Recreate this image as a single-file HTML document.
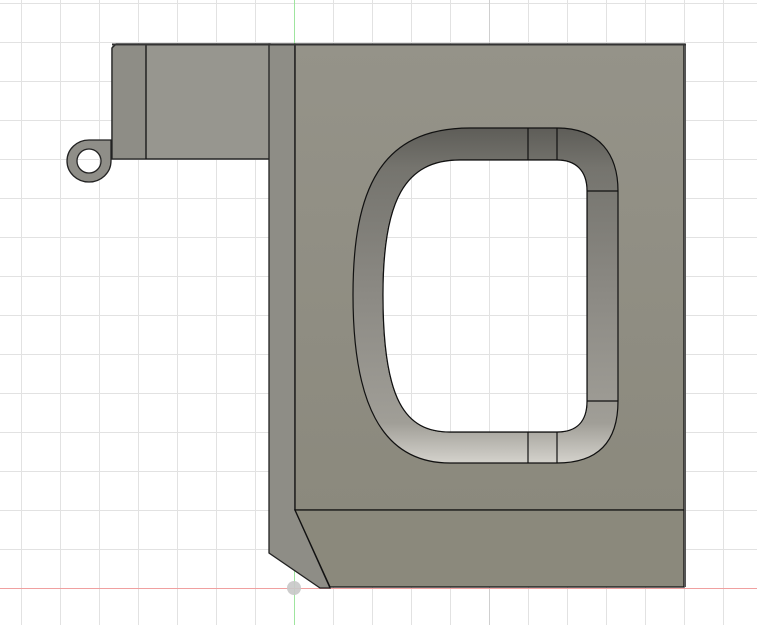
<!DOCTYPE html>
<html><head><meta charset="utf-8"><style>html,body{margin:0;padding:0;background:#fff;overflow:hidden}svg{display:block}</style></head>
<body>
<svg width="757" height="625" viewBox="0 0 757 625" xmlns="http://www.w3.org/2000/svg">
<defs>
<pattern id="g" x="294" y="588" width="39" height="39" patternUnits="userSpaceOnUse">
<path d="M0.5 0V39M0 0.5H39" stroke="#e2e2e2" stroke-width="1" fill="none"/>
</pattern>
<linearGradient id="tube" x1="0" y1="0" x2="0" y2="1">
<stop offset="0" stop-color="#5e5d58"/>
<stop offset="0.12" stop-color="#75746e"/>
<stop offset="0.5" stop-color="#8c8a84"/>
<stop offset="0.88" stop-color="#a09e97"/>
<stop offset="1" stop-color="#d4d2cc"/>
</linearGradient>
<linearGradient id="body" x1="0" y1="0" x2="0" y2="1">
<stop offset="0" stop-color="#959389"/>
<stop offset="1" stop-color="#8b897d"/>
</linearGradient>
</defs>
<rect width="757" height="625" fill="#fff"/>
<rect width="757" height="625" fill="url(#g)"/>
<line x1="489.5" y1="0" x2="489.5" y2="625" stroke="#cfcfcf"/>
<line x1="294.5" y1="0" x2="294.5" y2="625" stroke="#9fe59f"/>
<line x1="0" y1="588.5" x2="757" y2="588.5" stroke="#f0a0a0"/>
<!-- ring -->
<path fill-rule="evenodd" d="M89 140 L111 140 L111 161 A22 21 0 1 1 89 140 Z M101 161 A12 12 0 1 0 77 161 A12 12 0 1 0 101 161 Z" fill="#8f8e88" stroke="#222" stroke-width="1.3"/>
<!-- tab -->
<path d="M112 48 L116 44 L270 44 L270 159 L112 159 Z" fill="#97968f" stroke="#222" stroke-width="1.3"/>
<rect x="112" y="46" width="34" height="113" fill="#8e8d86"/>
<path d="M112 48 L116 44 L270 44 L270 159 L112 159 Z" fill="none" stroke="#222" stroke-width="1.3"/>
<line x1="146" y1="44" x2="146" y2="159" stroke="#111" stroke-width="1.3"/>
<!-- body left strip -->
<path d="M269 44 L295 44 L295 510 L330 588 L320 588 L269 553 Z" fill="#8e8d86" stroke="#222" stroke-width="1.3"/>
<!-- main body -->
<path d="M295 44 L684 44 L684 510 L295 510 Z" fill="url(#body)" stroke="#111" stroke-width="1.3"/>
<path d="M295 510 L684 510 L684 587 L330 587 Z" fill="#8b897c" stroke="#111" stroke-width="1.3"/>
<rect x="684" y="44" width="2" height="543" fill="#555"/>
<line x1="112" y1="44.5" x2="686" y2="44.5" stroke="#333" stroke-width="2"/>
<!-- handle -->
<path fill-rule="evenodd" fill="url(#tube)" stroke="#111" stroke-width="1.2"
d="M557 128 C600 128 618 155 618 191 L618 401 C618 440 600 463 557 463 L450 463 C380 463 353 400 353 295 C353 190 380 128 470 128 Z
M557 160 C575 160 587 170 587 191 L587 401 C587 420 578 432 557 432 L450 432 C405 432 383 400 383 295 C383 200 405 160 460 160 Z"/>
<path fill="#fff" d="M557 160 C575 160 587 170 587 191 L587 401 C587 420 578 432 557 432 L450 432 C405 432 383 400 383 295 C383 200 405 160 460 160 Z"/>
<path fill="url(#g)" stroke="#111" stroke-width="1.2" d="M557 160 C575 160 587 170 587 191 L587 401 C587 420 578 432 557 432 L450 432 C405 432 383 400 383 295 C383 200 405 160 460 160 Z"/>
<g stroke="#111" stroke-width="1.2">
<line x1="528" y1="128" x2="528" y2="160"/><line x1="557" y1="128" x2="557" y2="160"/>
<line x1="528" y1="432" x2="528" y2="463"/><line x1="557" y1="432" x2="557" y2="463"/>
<line x1="587" y1="191" x2="618" y2="191"/><line x1="587" y1="401" x2="618" y2="401"/>
</g>
<circle cx="294" cy="588" r="7" fill="#c8c8c8" opacity="0.9"/>
</svg>
</body></html>
